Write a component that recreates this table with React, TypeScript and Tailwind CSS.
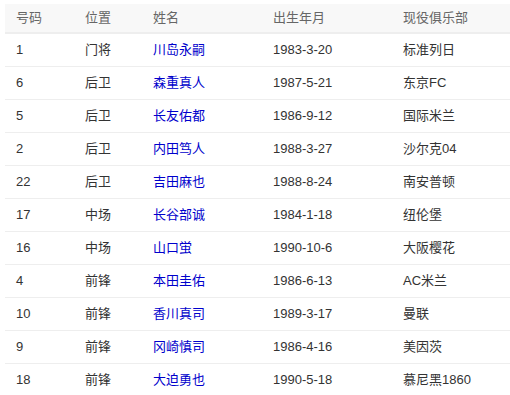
const players = [
  { no: "1", pos: "门将", name: "川岛永嗣", born: "1983-3-20", club: "标准列日" },
  { no: "6", pos: "后卫", name: "森重真人", born: "1987-5-21", club: "东京FC" },
  { no: "5", pos: "后卫", name: "长友佑都", born: "1986-9-12", club: "国际米兰" },
  { no: "2", pos: "后卫", name: "内田笃人", born: "1988-3-27", club: "沙尔克04" },
  { no: "22", pos: "后卫", name: "吉田麻也", born: "1988-8-24", club: "南安普顿" },
  { no: "17", pos: "中场", name: "长谷部诚", born: "1984-1-18", club: "纽伦堡" },
  { no: "16", pos: "中场", name: "山口蛍", born: "1990-10-6", club: "大阪樱花" },
  { no: "4", pos: "前锋", name: "本田圭佑", born: "1986-6-13", club: "AC米兰" },
  { no: "10", pos: "前锋", name: "香川真司", born: "1989-3-17", club: "曼联" },
  { no: "9", pos: "前锋", name: "冈崎慎司", born: "1986-4-16", club: "美因茨" },
  { no: "18", pos: "前锋", name: "大迫勇也", born: "1990-5-18", club: "慕尼黑1860" },
];

export default function App() {
  return (
    <div
      className="bg-white pl-[5px] pt-[4px] text-[13px] text-[#333]"
      style={{ fontFamily: '"Liberation Sans", "Noto Sans CJK SC", sans-serif' }}
    >
      <table className="w-[505px] border-collapse table-fixed">
        <colgroup>
          <col className="w-[69px]" />
          <col className="w-[68px]" />
          <col className="w-[120px]" />
          <col className="w-[130px]" />
          <col />
        </colgroup>
        <thead>
          <tr className="bg-[#f8f8f8] text-[#666] h-[29px] border-b-2 border-[#eeeeee]">
            <th className="text-left font-normal pl-[11px]">号码</th>
            <th className="text-left font-normal pl-[11px]">位置</th>
            <th className="text-left font-normal pl-[11px]">姓名</th>
            <th className="text-left font-normal pl-[11px]">出生年月</th>
            <th className="text-left font-normal pl-[11px]">现役俱乐部</th>
          </tr>
        </thead>
        <tbody>
          {players.map((p, i) => (
            <tr
              key={p.no}
              className={`h-[33px] ${i < players.length - 1 ? "border-b border-[#eeeeee]" : ""}`}
            >
              <td className="pl-[11px]">{p.no}</td>
              <td className="pl-[11px]">{p.pos}</td>
              <td className="pl-[11px] text-[#0000cc]">{p.name}</td>
              <td className="pl-[11px]">{p.born}</td>
              <td className="pl-[11px]">{p.club}</td>
            </tr>
          ))}
        </tbody>
      </table>
    </div>
  );
}
